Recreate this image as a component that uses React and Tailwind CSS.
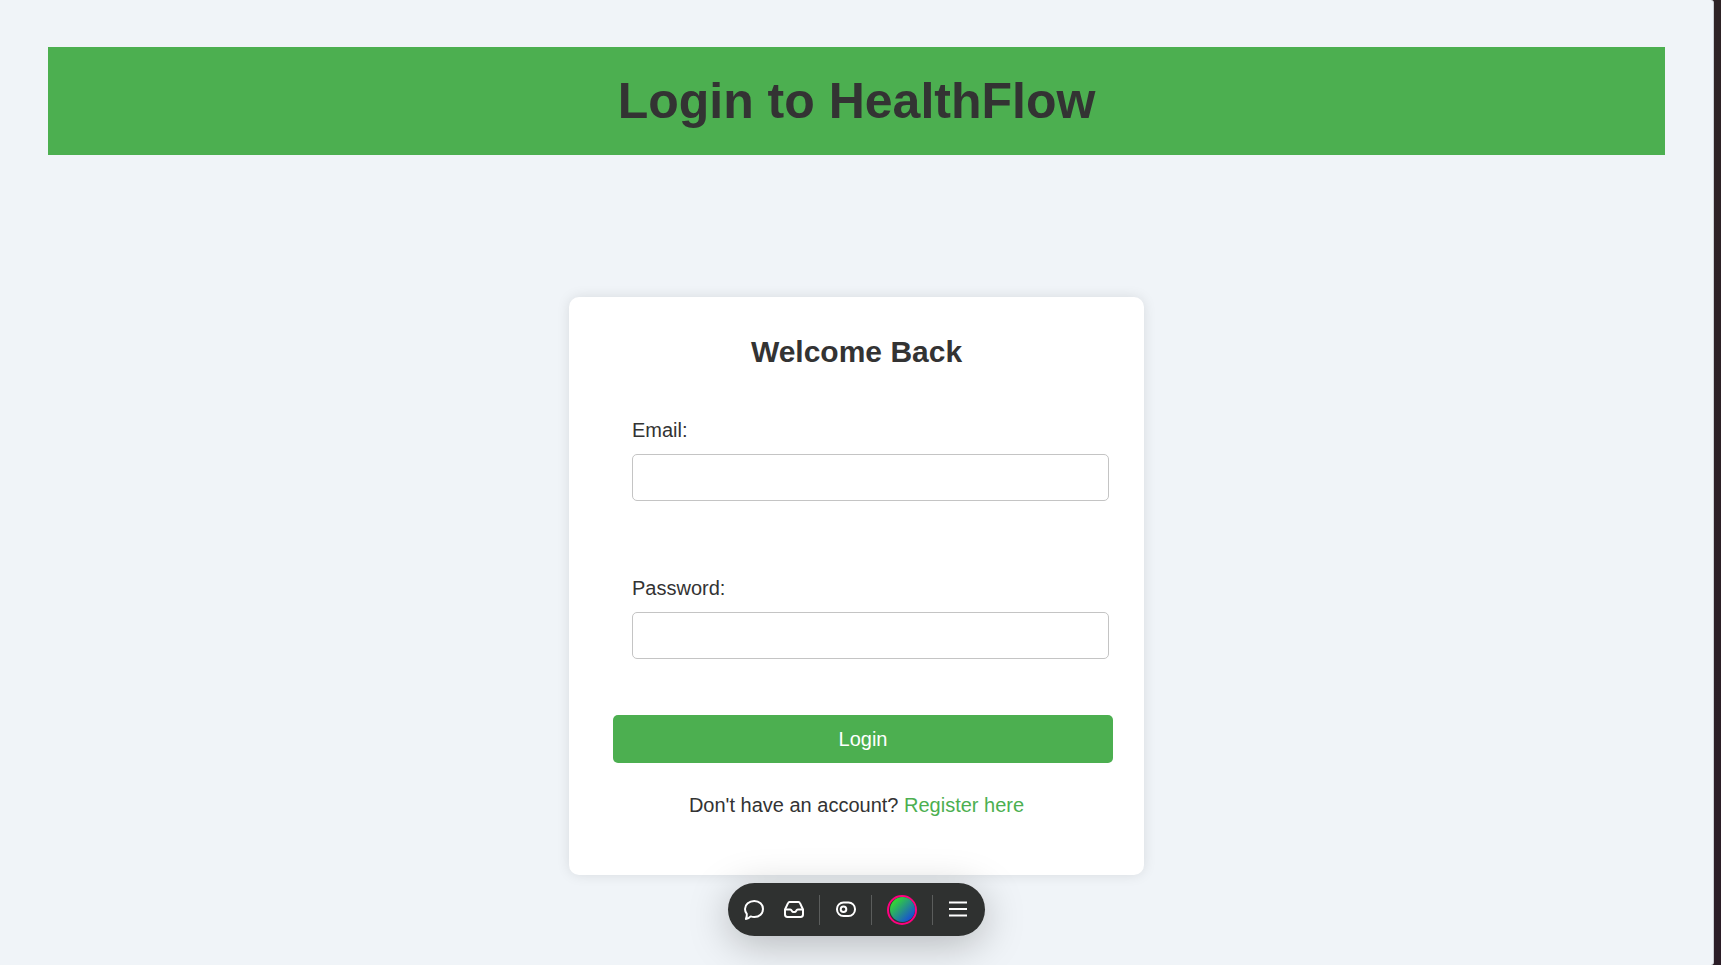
import { useState } from "react";

const CommentIcon = () => (
  <svg width="20" height="20" viewBox="0 0 20 20" fill="none" stroke="currentColor" strokeWidth="2" strokeLinejoin="round">
    <path d="M10.3 1C15.4 1 19 4.5 19 8.9C19 13.5 15.4 17 10.3 17C9 17 7.8 16.8 6.7 16.4C5.4 17.8 3.9 18.7 1.9 18.9C2.7 17.4 3 15.9 2.8 13.9C1.7 12.6 1 10.9 1 8.9C1 4.5 5.2 1 10.3 1Z" />
  </svg>
);

const InboxIcon = () => (
  <svg width="20" height="20" viewBox="0 0 20 20" fill="none" stroke="currentColor" strokeWidth="2" strokeLinejoin="round">
    <path d="M1 9.5L4 3.1C4.3 2.4 4.8 2 5.5 2H14.5C15.2 2 15.7 2.4 16 3.1L19 9.5V14.6C19 16.2 18.2 17 16.6 17H3.4C1.8 17 1 16.2 1 14.6V9.5Z" />
    <path d="M1 9.5H6.2C7.2 9.5 7.4 10 7.8 10.8C8.2 11.8 8.8 12.1 10 12.1C11.2 12.1 11.8 11.8 12.2 10.8C12.6 10 12.8 9.5 13.8 9.5H19" />
  </svg>
);

const ToggleIcon = () => (
  <svg width="20" height="20" viewBox="0 0 20 20" fill="none" stroke="currentColor" strokeWidth="2">
    <rect x="1" y="2.5" width="18" height="13.5" rx="6.5" />
    <circle cx="7.5" cy="9.2" r="2.8" />
  </svg>
);

const MenuIcon = () => (
  <svg width="20" height="20" viewBox="0 0 20 20" fill="none" stroke="currentColor" strokeWidth="2">
    <path d="M1 2.5H19M1 9H19M1 15.5H19" />
  </svg>
);

const Divider = () => <span className="h-[30px] w-px bg-[#5b5d5c]" />;

const Toolbar = () => (
  <div className="absolute inset-x-0 bottom-[29px] flex justify-center">
    <div className="flex h-[53px] items-center gap-[15px] rounded-full bg-[#2f3130] px-4 text-white shadow-[0_8px_40px_rgba(0,0,0,0.25)]">
      <div className="flex gap-5">
        <button type="button" aria-label="Comments">
          <CommentIcon />
        </button>
        <button type="button" aria-label="Inbox">
          <InboxIcon />
        </button>
      </div>
      <Divider />
      <button type="button" aria-label="Toggle preview" className="pl-px">
        <ToggleIcon />
      </button>
      <Divider />
      <button
        type="button"
        aria-label="Account"
        className="flex size-[30px] items-center justify-center rounded-full border-2 border-[#ff0080]"
      >
        <span className="size-[25px] rounded-full bg-[linear-gradient(135deg,#35e326_10%,#1546e0_90%)]" />
      </button>
      <Divider />
      <button type="button" aria-label="Menu" className="pr-px">
        <MenuIcon />
      </button>
    </div>
  </div>
);

const Field = ({ id, label, type, value, onChange }) => (
  <div className="flex flex-col gap-3 pr-[35px] pl-[63px]">
    <label htmlFor={id} className="leading-6">
      {label}
    </label>
    <input
      id={id}
      type={type}
      value={value}
      onChange={(e) => onChange(e.target.value)}
      className="h-[47px] w-full rounded-[5px] border border-[#c4c4c4] bg-white px-3"
    />
  </div>
);

const App = () => {
  const [email, setEmail] = useState("");
  const [password, setPassword] = useState("");

  return (
    <div className="bg-linear-to-b from-[#2e2326] to-[#2b1d27] pr-[7px] font-['Liberation_Sans',Arial,sans-serif] text-[20px] text-[#333]">
      <div className="relative min-h-screen rounded-r-[3px] border-r border-[#c9cdd2] bg-[#f0f4f8] px-12 pt-[47px]">
        {/* Header */}
        <header className="bg-[#4caf50] py-6 text-center">
          <h1 className="text-[50px] leading-[60px] font-bold">Login to HealthFlow</h1>
        </header>

        {/* Login card */}
        <main className="mx-auto mt-[142px] w-full max-w-[575px] rounded-[10px] bg-white pt-[37px] pb-[58px] shadow-[0_0_13px_rgba(0,0,0,0.1)]">
          <h2 className="text-center text-[30px] leading-9 font-bold">Welcome Back</h2>

          <form onSubmit={(e) => e.preventDefault()} className="mt-12">
            <div className="flex flex-col gap-[75px]">
              <Field id="email" label="Email:" type="email" value={email} onChange={setEmail} />
              <Field id="password" label="Password:" type="password" value={password} onChange={setPassword} />
            </div>
            <div className="mt-14 pr-[31px] pl-11">
              <button type="submit" className="h-12 w-full rounded-[5px] bg-[#4caf50] text-white">
                Login
              </button>
            </div>
          </form>

          <p className="mt-[30px] text-center leading-6">
            Don't have an account?{" "}
            <a href="#register" className="text-[#4caf50]">
              Register here
            </a>
          </p>
        </main>

        <Toolbar />
      </div>
    </div>
  );
};

export default App;
